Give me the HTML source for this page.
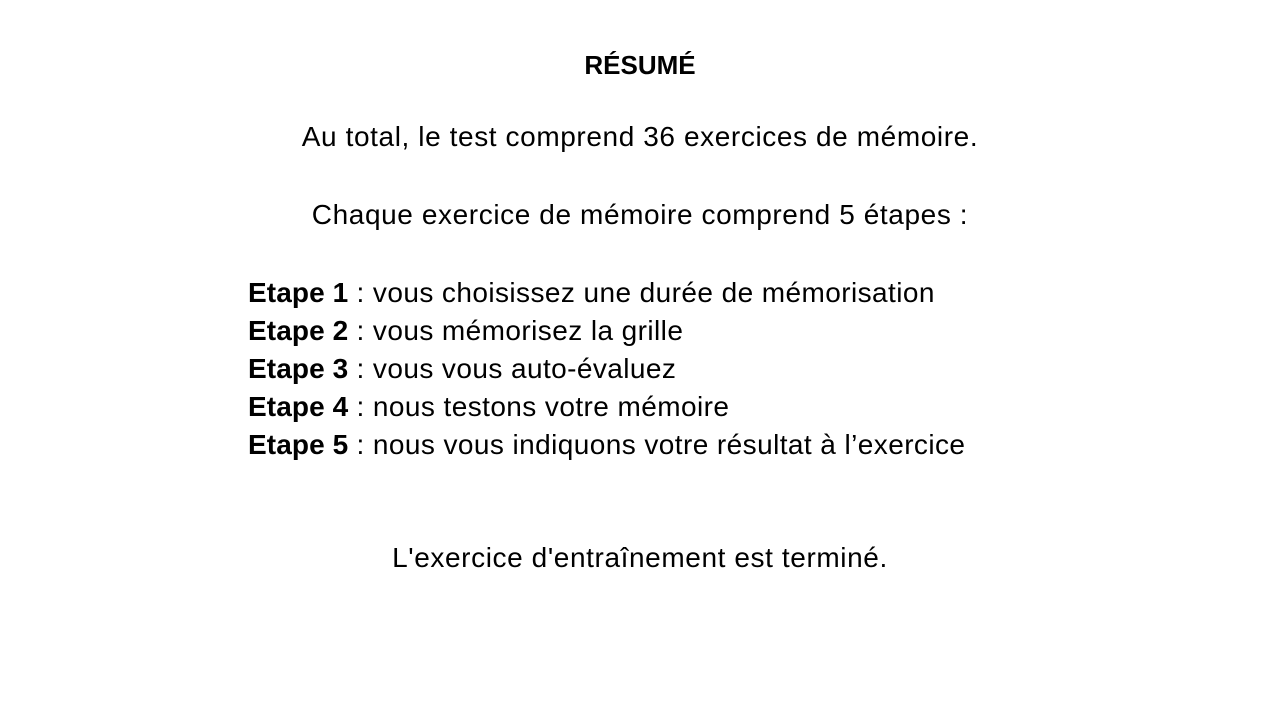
<!DOCTYPE html>
<html><head><meta charset="utf-8"><style>
html,body{margin:0;padding:0;background:#fff;}
body{width:1280px;height:720px;position:relative;overflow:hidden;font-family:"Liberation Sans",sans-serif;color:#000;}
.l{position:absolute;left:0;width:1280px;text-align:center;font-size:28px;line-height:30px;letter-spacing:0.6px;white-space:nowrap;}
.e{position:absolute;left:248px;font-size:28px;line-height:30px;letter-spacing:0.42px;white-space:nowrap;}
b{font-weight:bold;letter-spacing:0.1px;}
</style></head><body>
<div class="l" style="top:50px;font-weight:bold;font-size:26px;letter-spacing:0;">RÉSUMÉ</div>
<div class="l" style="top:122px;">Au total, le test comprend 36 exercices de mémoire.</div>
<div class="l" style="top:200px;">Chaque exercice de mémoire comprend 5 étapes :</div>
<div class="e" style="top:278px;"><b>Etape 1</b> : vous choisissez une durée de mémorisation</div>
<div class="e" style="top:316px;"><b>Etape 2</b> : vous mémorisez la grille</div>
<div class="e" style="top:354px;"><b>Etape 3</b> : vous vous auto-évaluez</div>
<div class="e" style="top:392px;"><b>Etape 4</b> : nous testons votre mémoire</div>
<div class="e" style="top:430px;"><b>Etape 5</b> : nous vous indiquons votre résultat à l’exercice</div>
<div class="l" style="top:543px;">L'exercice d'entraînement est terminé.</div>
</body></html>
